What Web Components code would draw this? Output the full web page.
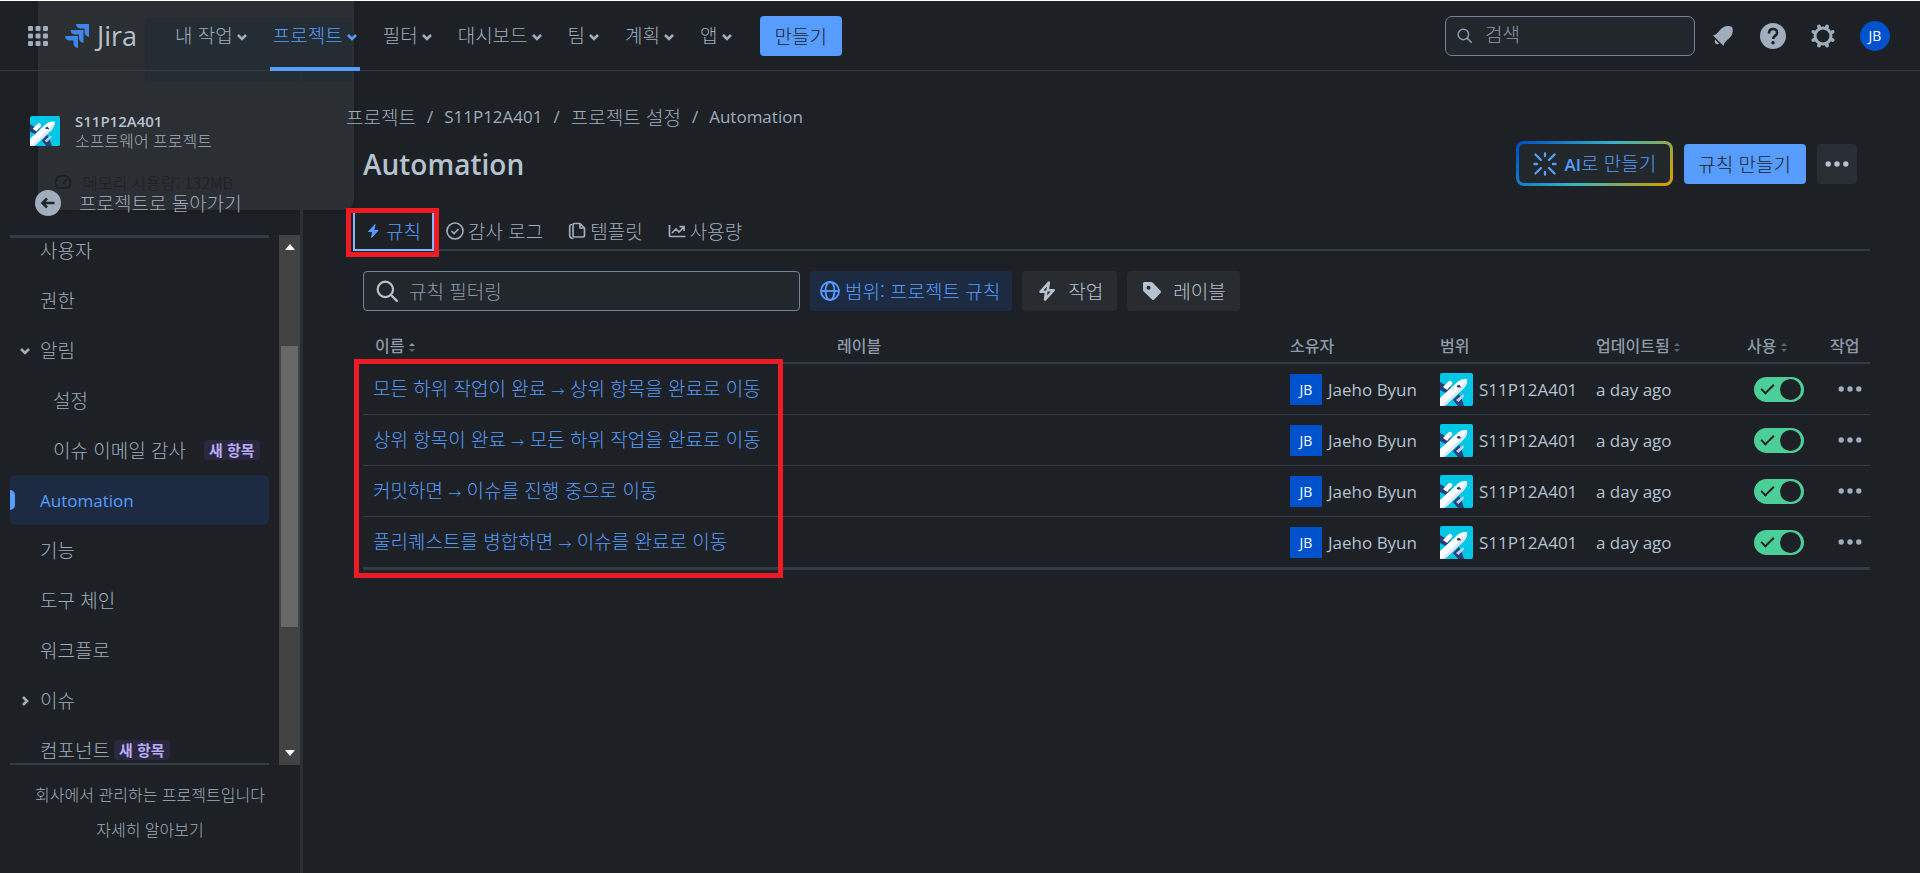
<!DOCTYPE html>
<html lang="ko">
<head>
<meta charset="utf-8">
<title>Automation - Jira</title>
<style>
  html, body { margin: 0; min-height: 100%; background: #1d2125; }
  body {
    --text: #9fadbc;
    --bright: #b6c2cf;
    --blue: #579dff;
    --line: #333c44;
    --mark: #ed1c24;
    --latin: "Open Sans", "Noto Sans", sans-serif;
    font: 300 19px/24px "Noto Sans CJK KR", "Open Sans", sans-serif;
    color: var(--text);
  }
</style>
</head>
<body>
<jira-app></jira-app>
<script>
const ICONS = {
  grid: ['0 0 20 20', '<g fill="currentColor"><rect width="5" height="5" rx="1"/><rect x="7.5" width="5" height="5" rx="1"/><rect x="15" width="5" height="5" rx="1"/><rect y="7.5" width="5" height="5" rx="1"/><rect x="7.5" y="7.5" width="5" height="5" rx="1"/><rect x="15" y="7.5" width="5" height="5" rx="1"/><rect y="15" width="5" height="5" rx="1"/><rect x="7.5" y="15" width="5" height="5" rx="1"/><rect x="15" y="15" width="5" height="5" rx="1"/></g>'],
  jira: ['0 0 24 24', '<g fill="#3f85e8"><path d="M11 0h13v13c-3-.6-4.500-2.500-4.500-5V4.500H16C13 4.500 11.300 3 11 0z"/><path d="M5.500 6h13v13c-3-.6-4.500-2.500-4.500-5v-3.500h-3.500C7.500 10.500 5.800 9 5.500 6z"/><path d="M0 12h13v12c-3-.3-4.500-2.200-4.500-4.600v-2.900H5C2 16.500.3 15 0 12z"/></g>'],
  down: ['0 0 10 10', '<path d="M1 3l4 4 4-4" fill="none" stroke="currentColor" stroke-width="2.600"/>'],
  right: ['0 0 10 10', '<path d="M3 1l4 4-4 4" fill="none" stroke="currentColor" stroke-width="2.600"/>'],
  search: ['0 0 20 20', '<g fill="none" stroke="currentColor" stroke-width="2" stroke-linecap="round"><circle cx="8.500" cy="8.500" r="7"/><path d="M13.800 13.800L19 19"/></g>'],
  bell: ['0 0 22 22', '<g fill="currentColor"><path d="M1 10.600C4 9.800 6 7.500 8 5c3-3.600 6-4.400 10-3.800 1.600.3 2.400 1.200 2.600 2.400.7 4-.3 7.300-3.600 10-2.600 2-4.800 4-5.600 7.200z"/><path d="M3 14.500l4 4c-1.200 1.200-2.600 1-3.500 0-.9-1-.9-2.600-.5-4z"/></g>'],
  help: ['0 0 26 26', '<circle cx="13" cy="13" r="13" fill="currentColor"/><path d="M9 10.500C9 7.700 10.700 6 13.100 6c2.300 0 4 1.500 4 3.700 0 3.300-4 3-4 6.300" fill="none" stroke="#1d2125" stroke-width="2.600"/><circle cx="13" cy="19.700" r="1.700" fill="#1d2125"/>'],
  gear: ['0 0 24 24', '<circle cx="12" cy="12" r="8" fill="none" stroke="currentColor" stroke-width="3"/><g stroke="currentColor" stroke-width="3.600" stroke-linecap="round"><path d="M8.300 3.200l-.4-.9M15.700 3.200l.4-.9M8.300 20.800l-.4.900M15.700 20.800l.4.900M3.200 8.300l-.9-.4M20.800 8.300l.9-.4M3.200 15.700l-.9.400M20.800 15.700l.9.400"/></g>'],
  back: ['0 0 26 26', '<circle cx="13" cy="13" r="13" fill="currentColor"/><path d="M19.500 13H8M12 8.500L7.500 13l4.500 4.500" fill="none" stroke="#22272b" stroke-width="2.600"/>'],
  plane: ['0 0 33 33', '<rect width="33" height="33" rx="2" fill="#00c7e5"/><path d="M0 9l5 3 6 2-5 6-6-3z" fill="#253f78"/><path d="M13 27l6-6 3 6 2 6h-6z" fill="#253f78"/><path d="M4 14l5-5c1-1 3 0 2.500 1.500L7 16z" fill="#fff" stroke="#fff" stroke-width="1.500" stroke-linejoin="round"/><path d="M16 27l6-5c1.500-1 2.500 0 1.500 2l-5 5z" fill="#c1cdf0"/><path d="M0 25L18 8.500C21 6 25 5.500 27 6.300c.6 2.500-.5 5.700-3 8.700L7 31l-3 2H0z" fill="#fff"/><path d="M27 6.300c.6 2.500-.5 5.700-3 8.700L7 31l-3 2H1L21 14c2.500-2.500 4-5 6-7.700z" fill="#dee6fa"/><path d="M17 13l2 1M18.500 12l2 2.500" stroke="#253858" stroke-width="1.400"/>'],
  ai: ['0 0 24 24', '<g stroke="currentColor" stroke-width="2.400" stroke-linecap="round"><path d="M12 1.500v2.500M12 20v2.500M1.500 12H4M20 12h2.500M2.500 2.500L8 8M21.500 2.500L16 8M2.500 21.500L8 16M21.500 21.500L16 16"/></g>'],
  dots: ['0 0 24 6', '<g fill="currentColor"><circle cx="3.200" cy="3" r="2.700"/><circle cx="12" cy="3" r="2.700"/><circle cx="20.800" cy="3" r="2.700"/></g>'],
  bolt: ['0 0 20 20', '<path d="M12 3.500L5.500 10.500h4.300L8.500 16.500l6.500-7h-4.200z" fill="currentColor" stroke="currentColor" stroke-linejoin="round"/>'],
  boltline: ['0 0 20 20', '<path d="M11.800 1.500L3.500 10.800h5.700L8 18.500l8.700-9.300h-6z" fill="none" stroke="currentColor" stroke-width="2.600" stroke-linejoin="round"/>'],
  audit: ['0 0 20 20', '<g fill="none" stroke="currentColor" stroke-width="1.600"><circle cx="10" cy="10" r="8"/><path d="M6.500 10l2.500 2.500 4.500-4.500"/></g>'],
  template: ['0 0 20 20', '<g fill="none" stroke="currentColor" stroke-width="1.700" stroke-linejoin="round"><path d="M7.500 2.500h5.500l4.500 4.500v7.500c0 .8-.5 1.500-1.500 1.500H7.500C6.500 16 6 15.500 6 14.500V4c0-1 .5-1.500 1.500-1.500zM13 2.500V7h4.500"/><path d="M5 3.500C3 3.500 2.700 4 2.700 6v8c0 2.500 1 3.500 3.800 3.500"/></g>'],
  chart: ['0 0 20 20', '<g fill="none" stroke="currentColor" stroke-width="1.700"><path d="M2.500 4v10.500c0 .6.400 1 1 1h15"/><path d="M5 12l4-4 3 3 5-5M12.500 5.700H17V10"/></g>'],
  globe: ['0 0 20 20', '<g fill="none" stroke="currentColor" stroke-width="1.800"><circle cx="10" cy="10" r="9"/><ellipse cx="10" cy="10" rx="4.500" ry="9"/><path d="M1 10h18"/></g>'],
  tag: ['0 0 20 20', '<path fill="currentColor" fill-rule="evenodd" d="M2.500 1h6.700c.5 0 1 .2 1.300.6l8 8.200c.7.700.7 1.600 0 2.300l-6.200 6.400c-.7.700-1.600.7-2.300 0L1.700 10.400C1.200 10 1 9.500 1 9V2.600C1 1.600 1.600 1 2.500 1zM6.500 4.700a2 2 0 1 0 .01 4 2 2 0 0 0-.01-4z"/>'],
  sort: ['0 0 6 10', '<path d="M0 4l3-3 3 3z" fill="currentColor"/><path d="M0 7l3 3 3-3z" fill="#5b6673"/>'],
  up: ['0 0 10 6', '<path d="M0 6l5-6 5 6z" fill="#fff"/>'],
  drop: ['0 0 10 6', '<path d="M0 0l5 6 5-6z" fill="#fff"/>'],
  gauge: ['0 0 20 20', '<path d="M4 16.500C-.5 11 2 3 10 3s10.500 8 6 13.500zM10 12l4-5" fill="none" stroke="currentColor" stroke-width="2"/>']
};

const RESET = `<style>
  * { box-sizing: border-box; }
  a { color: inherit; text-decoration: none; }
  button, input { font: inherit; color: inherit; margin: 0; border: 0; background: none; }
  button { display: flex; align-items: center; padding: 0; }
  .en { font-family: var(--latin); font-size: 17px; font-weight: 400; }
</style>`;

function define(name, html) {
  customElements.define(name, class extends HTMLElement {
    constructor() {
      super();
      const t = document.createElement('template');
      t.innerHTML = RESET + html;
      this.attachShadow({ mode: 'open' }).append(t.content.cloneNode(true));
    }
  });
}

/* <ui-icon name w h>: one glyph from the icon set */
customElements.define('ui-icon', class extends HTMLElement {
  connectedCallback() {
    if (this.shadowRoot) return;
    const [box, body] = ICONS[this.getAttribute('name')];
    const w = this.getAttribute('w'), h = this.getAttribute('h') || w;
    this.attachShadow({ mode: 'open' }).innerHTML =
      `<style>:host{display:inline-flex;flex:none}svg{display:block}</style>
       <svg viewBox="${box}" width="${w}" height="${h}" aria-hidden="true">${body}</svg>`;
  }
});

define('ui-badge', `<style>
  :host { display: inline-block; flex: none; padding: 0 5px; border-radius: 4px; background: #2b273f;
    color: #b8acf6; font-size: 15px; line-height: 20px; font-weight: 700; }
</style><slot></slot>`);

define('nav-menu', `<style>
  :host { display: flex; height: 70px; }
  button { padding: 0 3px 2px; gap: 4px; border-bottom: 4px solid transparent; border-top: 4px solid transparent; line-height: 24px; }
  ui-icon { padding-top: 4px; }
  :host([active]) { color: var(--blue); }
  :host([active]) button { border-bottom-color: var(--blue); }
</style><button type="button"><slot></slot><ui-icon name="down" w="10"></ui-icon></button>`);

define('top-bar', `<style>
  :host { display: flex; align-items: center; height: 71px; padding: 0 30px 0 28px; border-top: 1px solid #fff; border-bottom: 1px solid var(--line); box-sizing: border-box; }
  .logo { display: flex; align-items: center; gap: 8px; width: 107px; margin-left: 17px; font: 27px/30px var(--latin); color: var(--bright); }
  nav { display: flex; gap: 20px; align-self: flex-start; }
  .create { margin-left: 25px; height: 40px; padding: 0 15px; border-radius: 4px; background: var(--blue); color: #1d2125; }
  .search { display: flex; align-items: center; gap: 13px; width: 250px; height: 40px; margin-left: auto; padding: 0 11px; border: 1px solid #738496; border-radius: 7px; background: #22272b; color: #8c9bab; }
  .search input { flex: 1; min-width: 0; padding: 0 0 4px; outline: none; }
  ::placeholder { color: #8c9bab; opacity: 1; }
  .tools { display: flex; gap: 10px; margin: 0 17px 0 8px; }
  .tools button { width: 40px; height: 40px; justify-content: center; }
  .me { width: 30px; height: 30px; border-radius: 50%; background: #0052cc; color: #fff; justify-content: center; font: 14px/20px var(--latin); }
</style>
<button type="button" aria-label="앱 전환"><ui-icon name="grid" w="20"></ui-icon></button>
<a class="logo" href="#"><ui-icon name="jira" w="24"></ui-icon>Jira</a>
<nav>
  <nav-menu>내 작업</nav-menu><nav-menu active>프로젝트</nav-menu><nav-menu>필터</nav-menu>
  <nav-menu>대시보드</nav-menu><nav-menu>팀</nav-menu><nav-menu>계획</nav-menu><nav-menu>앱</nav-menu>
</nav>
<button type="button" class="create">만들기</button>
<label class="search"><ui-icon name="search" w="15"></ui-icon><input type="text" placeholder="검색" aria-label="검색"></label>
<div class="tools">
  <button type="button" aria-label="알림"><ui-icon name="bell" w="22"></ui-icon></button>
  <button type="button" aria-label="도움말"><ui-icon name="help" w="26"></ui-icon></button>
  <button type="button" aria-label="설정"><ui-icon name="gear" w="24"></ui-icon></button>
</div>
<button type="button" class="me" aria-label="프로필">JB</button>`);

define('side-item', `<style>
  :host { display: flex; flex: none; height: 50px; position: relative; }
  a { flex: 1; display: flex; align-items: center; padding: 0 0 0 30px; border-radius: 6px; }
  :host([sub]) a { padding-left: 43px; gap: 18px; }
  :host(:not([sub])) a { gap: 4px; }
  :host([current]) a { padding-top: 2px; background: #1c2b42; color: var(--blue); font-family: var(--latin); font-size: 17px; font-weight: 400; }
  :host([current])::before { content: ""; position: absolute; left: 0; top: 15px; width: 5px; height: 20px; border-radius: 0 5px 5px 0; background: var(--blue); }
  ::slotted(ui-icon) { position: absolute; left: 10px; top: 21px; }
</style><a href="#"><slot></slot></a>`);

define('side-bar', `<style>
  :host { display: flex; flex-direction: column; width: 303px; flex: none; border-right: 3px solid #2a2f34; }
  .project { display: flex; align-items: center; gap: 15px; margin: 41px 0 0 30px; height: 38px; font-size: 16px; line-height: 19px; }
  .project b { display: block; font: 600 15px/19px var(--latin); color: var(--bright); }
  .back { display: flex; align-items: center; gap: 18px; margin: 40px 0 0 35px; height: 26px; padding-bottom: 1px; line-height: 20px; }
  .wrap { display: flex; margin: 19px 0 0; height: 530px; }
  .list { flex: 1; display: flex; flex-direction: column; justify-content: center; overflow: hidden; margin: 0 10px; padding-bottom: 1px; border-top: 3px solid var(--line); border-bottom: 2px solid var(--line); }
  .bar { width: 21px; display: flex; flex-direction: column; align-items: center; justify-content: space-between; padding: 9px 0; background: #424242; }
  .thumb { width: 17px; height: 281px; background: #686868; margin-bottom: 27px; }
  footer { display: flex; flex-direction: column; align-items: center; gap: 11px; padding-top: 17px; font-size: 16px; line-height: 24px; }
</style>
<div class="project"><ui-icon name="plane" w="30"></ui-icon><div><b>S11P12A401</b>소프트웨어 프로젝트</div></div>
<a class="back" href="#"><ui-icon name="back" w="26"></ui-icon>프로젝트로 돌아가기</a>
<div class="wrap">
  <nav class="list">
    <side-item>사용자</side-item>
    <side-item>권한</side-item>
    <side-item><ui-icon name="down" w="10"></ui-icon>알림</side-item>
    <side-item sub>설정</side-item>
    <side-item sub>이슈 이메일 감사<ui-badge>새 항목</ui-badge></side-item>
    <side-item current>Automation</side-item>
    <side-item>기능</side-item>
    <side-item>도구 체인</side-item>
    <side-item>워크플로</side-item>
    <side-item><ui-icon name="right" w="10"></ui-icon>이슈</side-item>
    <side-item>컴포넌트<ui-badge>새 항목</ui-badge></side-item>
  </nav>
  <div class="bar"><ui-icon name="up" w="10" h="6"></ui-icon><div class="thumb"></div><ui-icon name="drop" w="10" h="6"></ui-icon></div>
</div>
<footer><span>회사에서 관리하는 프로젝트입니다</span><a href="#">자세히 알아보기</a></footer>`);

define('page-head', `<style>
  :host { display: block; }
  .crumbs { display: flex; align-items: center; height: 24px; margin-left: -17px; }
  .crumbs i { font: 17px/24px var(--latin); margin: 0 11px; }
  .row { display: flex; align-items: center; height: 45px; margin-top: 12px; padding-right: 13px; gap: 11px; }
  h1 { flex: 1; margin: 0; font: 600 28px/40px var(--latin); color: var(--bright); }
  .row button { height: 40px; border-radius: 4px; }
  .row .ai { height: 45px; padding: 0 14px; gap: 8px; border: 3px solid transparent; border-radius: 8px; color: var(--blue);
    background: linear-gradient(#22272b, #22272b) padding-box, linear-gradient(135deg, #0055cc 5%, #37b4c3 50%, #cf9f02 95%) border-box; }
  .ai b { font: 600 17px/24px var(--latin); }
  .row .new { padding: 0 15px 0 14px; background: var(--blue); color: #1d2125; }
  .more { width: 40px; justify-content: center; background: #282e33; color: var(--bright); }
</style>
<nav class="crumbs"><a href="#">프로젝트</a><i>/</i><a class="en" href="#">S11P12A401</a><i>/</i><a href="#">프로젝트 설정</a><i>/</i><a class="en" href="#">Automation</a></nav>
<div class="row"><h1>Automation</h1>
  <button type="button" class="ai"><ui-icon name="ai" w="24"></ui-icon><span><b>AI</b>로 만들기</span></button>
  <button type="button" class="new">규칙 만들기</button>
  <button type="button" class="more" aria-label="더 보기"><ui-icon name="dots" w="24" h="6"></ui-icon></button>
</div>`);

define('tab-strip', `<style>
  :host { display: flex; gap: 24px; height: 41px; margin-top: 24px; border-bottom: 2px solid var(--line); }
  button { position: relative; height: 41px; gap: 3px; }
  .on { color: var(--blue); border-bottom: 2px solid var(--blue); border-top: 2px solid transparent; }
  .on::before { content: ""; position: absolute; inset: -2px -13px -2px -10px; border: 2px solid #85b8ff; border-top: 0; }
  .on::after { content: ""; position: absolute; inset: -4px -18px -8px -17px; border: 5px solid var(--mark); }
</style>
<button type="button" class="on"><ui-icon name="bolt" w="20"></ui-icon>규칙</button>
<button type="button"><ui-icon name="audit" w="20"></ui-icon>감사 로그</button>
<button type="button"><ui-icon name="template" w="20"></ui-icon>템플릿</button>
<button type="button"><ui-icon name="chart" w="20"></ui-icon>사용량</button>`);

define('filter-row', `<style>
  :host { display: flex; gap: 10px; margin-top: 20px; height: 40px; }
  label { display: flex; align-items: center; gap: 11px; width: 29%; padding: 0 12px; border: 1px solid #738496; border-radius: 4px; background: #22272b; color: #8c9bab; }
  label ui-icon { color: var(--bright); }
  input { flex: 1; min-width: 0; padding: 0; outline: none; }
  ::placeholder { color: #8c9bab; opacity: 1; }
  button { gap: 11px; padding: 0 14px 0 15px; border-radius: 4px; background: #282c31; color: var(--bright); }
  .scope { gap: 5px; padding: 0 12px 0 10px; background: #1c2b42; color: var(--blue); }
</style>
<label><ui-icon name="search" w="22"></ui-icon><input type="text" placeholder="규칙 필터링" aria-label="규칙 필터링"></label>
<button type="button" class="scope"><ui-icon name="globe" w="20"></ui-icon>범위: 프로젝트 규칙</button>
<button type="button"><ui-icon name="boltline" w="20"></ui-icon>작업</button>
<button type="button"><ui-icon name="tag" w="20"></ui-icon>레이블</button>`);

define('toggle-switch', `<style>
  :host { display: block; height: 25px; }
  input { appearance: none; display: block; position: relative; width: 50px; height: 25px; border-radius: 13px; background: #4bce97; }
  input::before { content: ""; position: absolute; right: 3px; top: 2px; width: 21px; height: 21px; border-radius: 50%; background: #1d2125; }
  input::after { content: ""; position: absolute; left: 10px; top: 4px; width: 5px; height: 11px; border: solid #1d2125; border-width: 0 2px 2px 0; transform: rotate(45deg); }
</style><input type="checkbox" role="switch" checked aria-label="사용">`);

const rules = [
  '모든 하위 작업이 완료 → 상위 항목을 완료로 이동',
  '상위 항목이 완료 → 모든 하위 작업을 완료로 이동',
  '커밋하면 → 이슈를 진행 중으로 이동',
  '풀리퀘스트를 병합하면 → 이슈를 완료로 이동'
].map(r => r.replace('→', '<span class="to">→</span>'));
define('rules-table', `<style>
  :host { display: block; position: relative; margin-top: 17px; }
  table { width: 100%; table-layout: fixed; border-collapse: separate; border-spacing: 0; border-bottom: 3px solid var(--line); }
  th { height: 36px; padding: 0 10px; text-align: left; font-size: 16px; line-height: 20px; font-weight: 500; color: #8c9bab; border-bottom: 2px solid var(--line); white-space: nowrap; }
  th:first-child { padding-left: 12px; }
  td { height: 51px; padding: 0 10px; border-bottom: 1px solid var(--line); white-space: nowrap; color: var(--bright); }
  tr:last-child td { height: 50px; border-bottom: 0; }
  td:first-child { padding-top: 1px; }
  td a { color: var(--blue); }
  .to { font-size: 13px; }
  .cell { display: flex; align-items: center; gap: 6px; height: 33px; }
  .cell span, td.day { padding-top: 2px; }
  .cell .jb { width: 32px; height: 31px; padding: 0; background: #0052cc; color: #fff; font: 14px/31px var(--latin); text-align: center; }
  td.use { padding-left: 17px; }
  td.act { padding-left: 18px; }
  .act button { height: 24px; color: var(--text); }
  .dim { color: #5b6673; }
  .mark { position: absolute; left: -9px; top: 31px; bottom: -8px; width: 429px; border: 5px solid var(--mark); pointer-events: none; }
</style>
<table>
  <colgroup><col style="width:464px"><col><col style="width:150px"><col style="width:156px"><col style="width:151px"><col style="width:83px"><col style="width:50px"></colgroup>
  <thead><tr><th>이름 <ui-icon name="sort" w="6" h="10"></ui-icon></th><th>레이블</th><th>소유자</th><th>범위</th>
    <th>업데이트됨 <ui-icon class="dim" name="sort" w="6" h="10"></ui-icon></th><th>사용 <ui-icon class="dim" name="sort" w="6" h="10"></ui-icon></th><th>작업</th></tr></thead>
  <tbody>${rules.map(r => `<tr><td><a href="#">${r}</a></td><td></td>
    <td><div class="cell en"><span class="jb">JB</span><span>Jaeho Byun</span></div></td>
    <td><div class="cell en"><ui-icon name="plane" w="33"></ui-icon><span>S11P12A401</span></div></td>
    <td class="en day">a day ago</td>
    <td class="use"><toggle-switch></toggle-switch></td>
    <td class="act"><button type="button" aria-label="작업"><ui-icon name="dots" w="24" h="6"></ui-icon></button></td></tr>`).join('')}</tbody>
</table>
<div class="mark"></div>`);

/* Fading browser tab preview that hangs over the top left corner */
define('tab-preview', `<style>
  :host { position: absolute; z-index: -1; left: 38px; top: 1px; width: 316px; height: 209px; background: #2b2e32; border-radius: 0 0 10px 10px; overflow: hidden; box-shadow: 0 0 4px #17191c; }
  .shots { display: flex; gap: 5px; padding-top: 17px; }
  .a { width: 102px; height: 64px; background: #2b2f31; }
  .b { flex: 1; background: #252d34; margin-right: 2px; }
  p { display: flex; align-items: center; gap: 11px; margin: 91px 0 0 16px; font-size: 16px; line-height: 18px; color: #1d2023; }
</style>
<div class="shots"><div class="a"></div><div class="b"></div></div>
<p><ui-icon name="gauge" w="18"></ui-icon><span>메모리 사용량: 132MB</span></p>`);

define('jira-app', `<style>
  :host { display: flex; flex-direction: column; min-height: 100vh; position: relative; z-index: 0; }
  .body { flex: 1; display: flex; }
  main { flex: 1; min-width: 0; padding: 34px 50px 0 60px; }
</style>
<tab-preview></tab-preview>
<top-bar></top-bar>
<div class="body"><side-bar></side-bar>
  <main><page-head></page-head><tab-strip></tab-strip><filter-row></filter-row><rules-table></rules-table></main>
</div>`);
</script>
</body>
</html>
